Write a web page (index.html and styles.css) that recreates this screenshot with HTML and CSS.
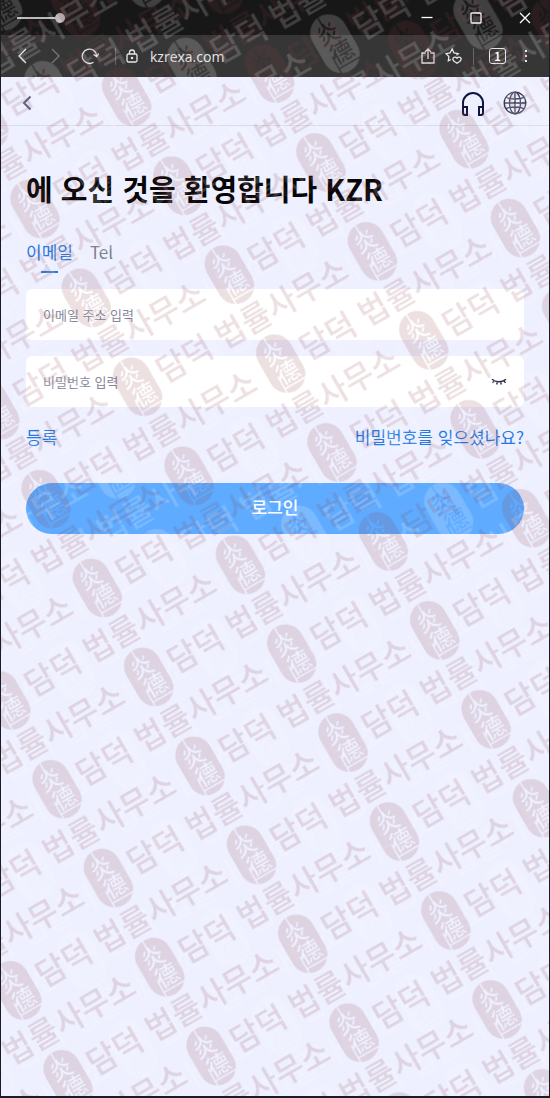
FILE: index.html
```html
<!DOCTYPE html>
<html lang="ko">
<head>
  <meta charset="UTF-8">
  <meta name="viewport" content="width=device-width, initial-scale=1">
  <title>KZR</title>
  <link rel="stylesheet" href="styles.css">
</head>
<body>
  <div class="window">
    <div class="titlebar">
      <input type="range" class="opacity" min="0" max="100" value="100" aria-label="Opacity">
      <div class="window-buttons">
        <button type="button" aria-label="Minimize"><svg width="12" height="12" viewBox="0 0 12 12"><path d="M0.5 5.500h11"/></svg></button>
        <button type="button" aria-label="Maximize"><svg width="12" height="12" viewBox="0 0 12 12"><rect x="1" y="1" width="10" height="10" rx="1"/></svg></button>
        <button type="button" aria-label="Close"><svg width="12" height="12" viewBox="0 0 12 12"><path d="M1 1l10 10M11 1L1 11"/></svg></button>
      </div>
    </div>

    <div class="toolbar">
      <button type="button" aria-label="Back"><svg width="16" height="18" viewBox="0 0 16 18"><path d="M12 2L5 9l7 7"/></svg></button>
      <button type="button" class="dim" aria-label="Forward"><svg width="16" height="18" viewBox="0 0 16 18"><path d="M4 2l7 7-7 7"/></svg></button>
      <button type="button" class="reload" aria-label="Reload"><svg width="18" height="18" viewBox="0 0 18 18"><path d="M12.500 15.200A7.200 7.200 0 1 1 15.600 8.500M12.500 7.500l3.200 2 2-3"/></svg></button>
      <span class="divider"></span>
      <svg class="lock" width="12" height="14" viewBox="0 0 12 14"><rect x="1" y="5" width="10" height="8" rx="1.500"/><path d="M3.500 5V3.500a2.500 2.500 0 0 1 5 0V5"/><circle cx="6" cy="9" r=".6"/></svg>
      <span class="url">kzrexa.com</span>
      <button type="button" aria-label="Share"><svg width="14" height="16" viewBox="0 0 14 16"><path d="M4.500 5H1v10h12V5H9.500M7 11V1.500M4 4l3-3 3 3"/></svg></button>
      <button type="button" class="star" aria-label="Favorites"><svg width="18" height="18" viewBox="0 0 18 18"><path d="M6 12.500l-2.700 1.300.6-4.200L1 6.700l4-.7L7.200 2 9 6l4.200.6-1.700 1.600M12 16.200c-3.500-1.800-4.500-3.400-4-4.900.6-1.500 2.800-1.600 4-.1 1.200-1.500 3.500-1.400 4 .1.500 1.500-.5 3.100-4 4.900z"/></svg></button>
      <span class="divider"></span>
      <button type="button" class="tabs-count">1</button>
      <button type="button" class="more" aria-label="More"><svg width="4" height="14" viewBox="0 0 4 14"><path d="M1 1h2v2H1zM1 6h2v2H1zM1 11h2v2H1z"/></svg></button>
    </div>

    <header class="header">
      <button type="button" class="back" aria-label="Back"><svg width="10" height="16" viewBox="0 0 10 16"><path d="M8.500 1.500L2 8l6.500 6.500"/></svg></button>
      <button type="button" class="support" aria-label="Support"><svg width="24" height="26" viewBox="0 0 24 26"><path d="M2 18v-5C2 7.500 6.500 3 12 3s10 4.500 10 10v5M2 17h4v8H4a2 2 0 0 1-2-2zM22 17h-4v8h2a2 2 0 0 0 2-2z"/></svg></button>
      <button type="button" class="language" aria-label="Language"><svg width="24" height="24" viewBox="0 0 24 24"><circle cx="12" cy="12" r="10.800"/><ellipse cx="12" cy="12" rx="5.500" ry="10.800"/><path d="M12 1.200v21.600M1.200 12h21.600M3 6.500q9 3 18 0M3 17.500q9-3 18 0"/></svg></button>
    </header>

    <main class="login">
      <h1>에 오신 것을 환영합니다 KZR</h1>

      <div class="tabs">
        <button type="button" class="tab active">이메일</button>
        <button type="button" class="tab">Tel</button>
      </div>

      <form>
        <div class="field">
          <input type="email" placeholder="이메일 주소 입력" aria-label="이메일 주소 입력">
        </div>
        <div class="field">
          <input type="password" placeholder="비밀번호 입력" aria-label="비밀번호 입력">
          <button type="button" class="eye" aria-label="Show password"><svg width="16" height="8" viewBox="0 0 16 8"><path d="M1 1.200c4 3.400 10 3.400 14 0M3 2.800L1.500 4.800M6.300 3.900l-.6 2.600M9.700 3.900l.6 2.600M13 2.800l1.500 2"/></svg></button>
        </div>
        <div class="links">
          <a href="#">등록</a>
          <a href="#">비밀번호를 잊으셨나요?</a>
        </div>
        <button type="submit" class="submit">로그인</button>
      </form>
    </main>

    <svg class="watermark" aria-hidden="true">
      <defs>
        <mask id="cut" maskUnits="userSpaceOnUse" x="-20" y="-32" width="40" height="64">
          <rect x="-18.500" y="-31" width="37" height="62" rx="18.500" fill="#fff"/>
          <text class="seal-text" x="-1" y="-4">炎</text>
          <text class="seal-text" x="2" y="19">德</text>
          <path d="M-2-31v12M-9 10v19M-9 24h27" fill="none" stroke="#000" stroke-width="1.500"/>
        </mask>
        <rect id="seal" x="-20" y="-32" width="40" height="64" mask="url(#cut)"/>
      </defs>
      <g class="mark-light" id="light"></g>
      <g class="mark-dark" id="dark"></g>
    </svg>
  </div>

  <script>
    const NS = "http://www.w3.org/2000/svg";
    const stepX = 271;
    const stepY = 51.35;

    // Rows of seal + name, every second row shifted by half a step
    function fillMarks(id, x, y) {
      const layer = document.getElementById(id);
      layer.setAttribute("transform", `translate(${x} ${y}) rotate(-30)`);
      const rad = Math.PI / 6;

      for (let row = -10; row < 26; row++) {
        for (let col = -4; col < 4; col++) {
          const u = col * stepX + (row % 2 ? stepX / 2 : 0);
          const v = row * stepY;

          // skip the ones that never reach the window
          const px = x + u * Math.cos(rad) + v * Math.sin(rad);
          const py = y - u * Math.sin(rad) + v * Math.cos(rad);
          if (px < -240 || px > window.innerWidth + 30 || py < -40 || py > window.innerHeight + 160) continue;

          const seal = document.createElementNS(NS, "use");
          seal.setAttribute("href", "#seal");
          seal.setAttribute("x", u);
          seal.setAttribute("y", v);
          layer.appendChild(seal);

          const name = document.createElementNS(NS, "text");
          name.setAttribute("x", u + 25);
          name.setAttribute("y", v + 11);
          name.textContent = "담덕 법률사무소";
          layer.appendChild(name);
        }
      }
    }

    fillMarks("light", 191, 67);
    fillMarks("dark", 34, 209);
  </script>
</body>
</html>
```
FILE: styles.css
```css
* {
  box-sizing: border-box;
}

body {
  margin: 0;
  font-family: "Noto Sans CJK KR", "Noto Sans", sans-serif;
  background: #eef0ff;
}

button {
  display: flex;
  align-items: center;
  justify-content: center;
  padding: 0;
  border: 0;
  background: none;
  color: inherit;
  font-family: inherit;
  cursor: pointer;
}

svg {
  fill: none;
  stroke: currentColor;
}

.window {
  position: relative;
  min-height: 100vh;
  overflow: hidden;
  border: 1px solid #1c1c24;
  border-top: 0;
  border-bottom-width: 2px;
}

/* browser frame */
.titlebar {
  display: flex;
  align-items: center;
  justify-content: space-between;
  height: 35px;
  padding: 0 18px 0 16px;
  background: #171717;
  color: #fff;
}

.titlebar svg {
  stroke-width: 1.3;
}

.opacity {
  width: 48px;
  height: 12px;
  margin: 0;
  appearance: none;
  background: linear-gradient(#bbb, #bbb) center / 100% 2px no-repeat;
}

.opacity::-webkit-slider-thumb {
  appearance: none;
  width: 10px;
  height: 10px;
  border-radius: 50%;
  background: #bbb;
}

.window-buttons {
  display: flex;
  gap: 37px;
}

.toolbar {
  display: flex;
  align-items: center;
  height: 42px;
  padding: 0 21px 0 13px;
  background: #363636;
  color: #e8e8e8;
}

.toolbar svg {
  stroke-width: 1.3;
}

.toolbar .dim {
  margin-left: 18px;
  color: #777;
}

.reload {
  margin-left: 17px;
}

.divider {
  width: 1px;
  height: 17px;
  margin: 0 10px 0 16px;
  background: #666;
}

.url {
  flex: 1;
  margin-left: 12px;
  font-family: "Open Sans", sans-serif;
  font-size: 14px;
}

.star {
  margin-left: 10px;
}

.star + .divider {
  margin: 0 15px 0 10px;
}

.tabs-count {
  width: 17px;
  height: 16px;
  border: 1px solid #e8e8e8;
  border-radius: 3px;
  color: #fff;
  font-size: 11px;
  font-weight: 700;
  line-height: 14px;
}

.more {
  margin-left: 18px;
}

.more svg {
  fill: currentColor;
  stroke: none;
}

/* page */
.header {
  display: flex;
  align-items: center;
  height: 49px;
  padding: 4px 22px 0 21px;
  border-bottom: 1px solid #dadbe8;
}

.back {
  color: #5c6480;
  stroke-width: 2;
}

.support {
  margin-left: auto;
  color: #0e1640;
  stroke-width: 2;
}

.language {
  margin-left: 18px;
  color: #2b3150;
}

.language svg {
  stroke-width: 1.3;
}

.login {
  padding: 41px 25px;
}

h1 {
  margin: 0;
  font-size: 29px;
  font-weight: 700;
  line-height: 43px;
  color: #060606;
}

.tabs {
  display: flex;
  gap: 17px;
  margin-top: 29px;
}

.tab {
  position: relative;
  height: 34px;
  padding-bottom: 8px;
  font-size: 17px;
  line-height: 26px;
  color: #7b7f8d;
}

.tab.active {
  color: #1f7ae6;
}

.tab.active::after {
  content: "";
  position: absolute;
  bottom: 0;
  left: 15px;
  width: 17px;
  height: 2px;
  background: #1f7ae6;
}

.field {
  display: flex;
  align-items: center;
  height: 51px;
  margin-top: 16px;
  padding: 0 17px;
  border-radius: 6px;
  background: #fff;
}

.field input {
  flex: 1;
  min-width: 0;
  padding: 0;
  border: 0;
  outline: 0;
  background: none;
  font-family: inherit;
  font-size: 13px;
}

.field input::placeholder {
  color: #85879b;
}

.eye {
  color: #2a2a48;
  stroke-width: 1.4;
}

.links {
  display: flex;
  justify-content: space-between;
  margin-top: 17px;
  line-height: 26px;
}

.links a {
  color: #1f7ae6;
  font-size: 17px;
  text-decoration: none;
}

.submit {
  width: 100%;
  height: 51px;
  margin-top: 33px;
  padding-bottom: 4px;
  border-radius: 26px;
  background: #5eabff;
  color: #fff;
  font-size: 17px;
  font-weight: 500;
}

/* watermark */
.watermark {
  position: absolute;
  inset: 0;
  width: 100%;
  height: 100%;
  stroke: none;
  pointer-events: none;
  font-size: 32px;
  font-weight: 500;
}

.mark-light {
  fill: #fff;
  opacity: 0.18;
}

.mark-dark {
  fill: #883440;
  opacity: 0.16;
}

.seal-text {
  fill: #000;
  font-size: 23px;
  font-weight: 500;
  text-anchor: middle;
}
```
